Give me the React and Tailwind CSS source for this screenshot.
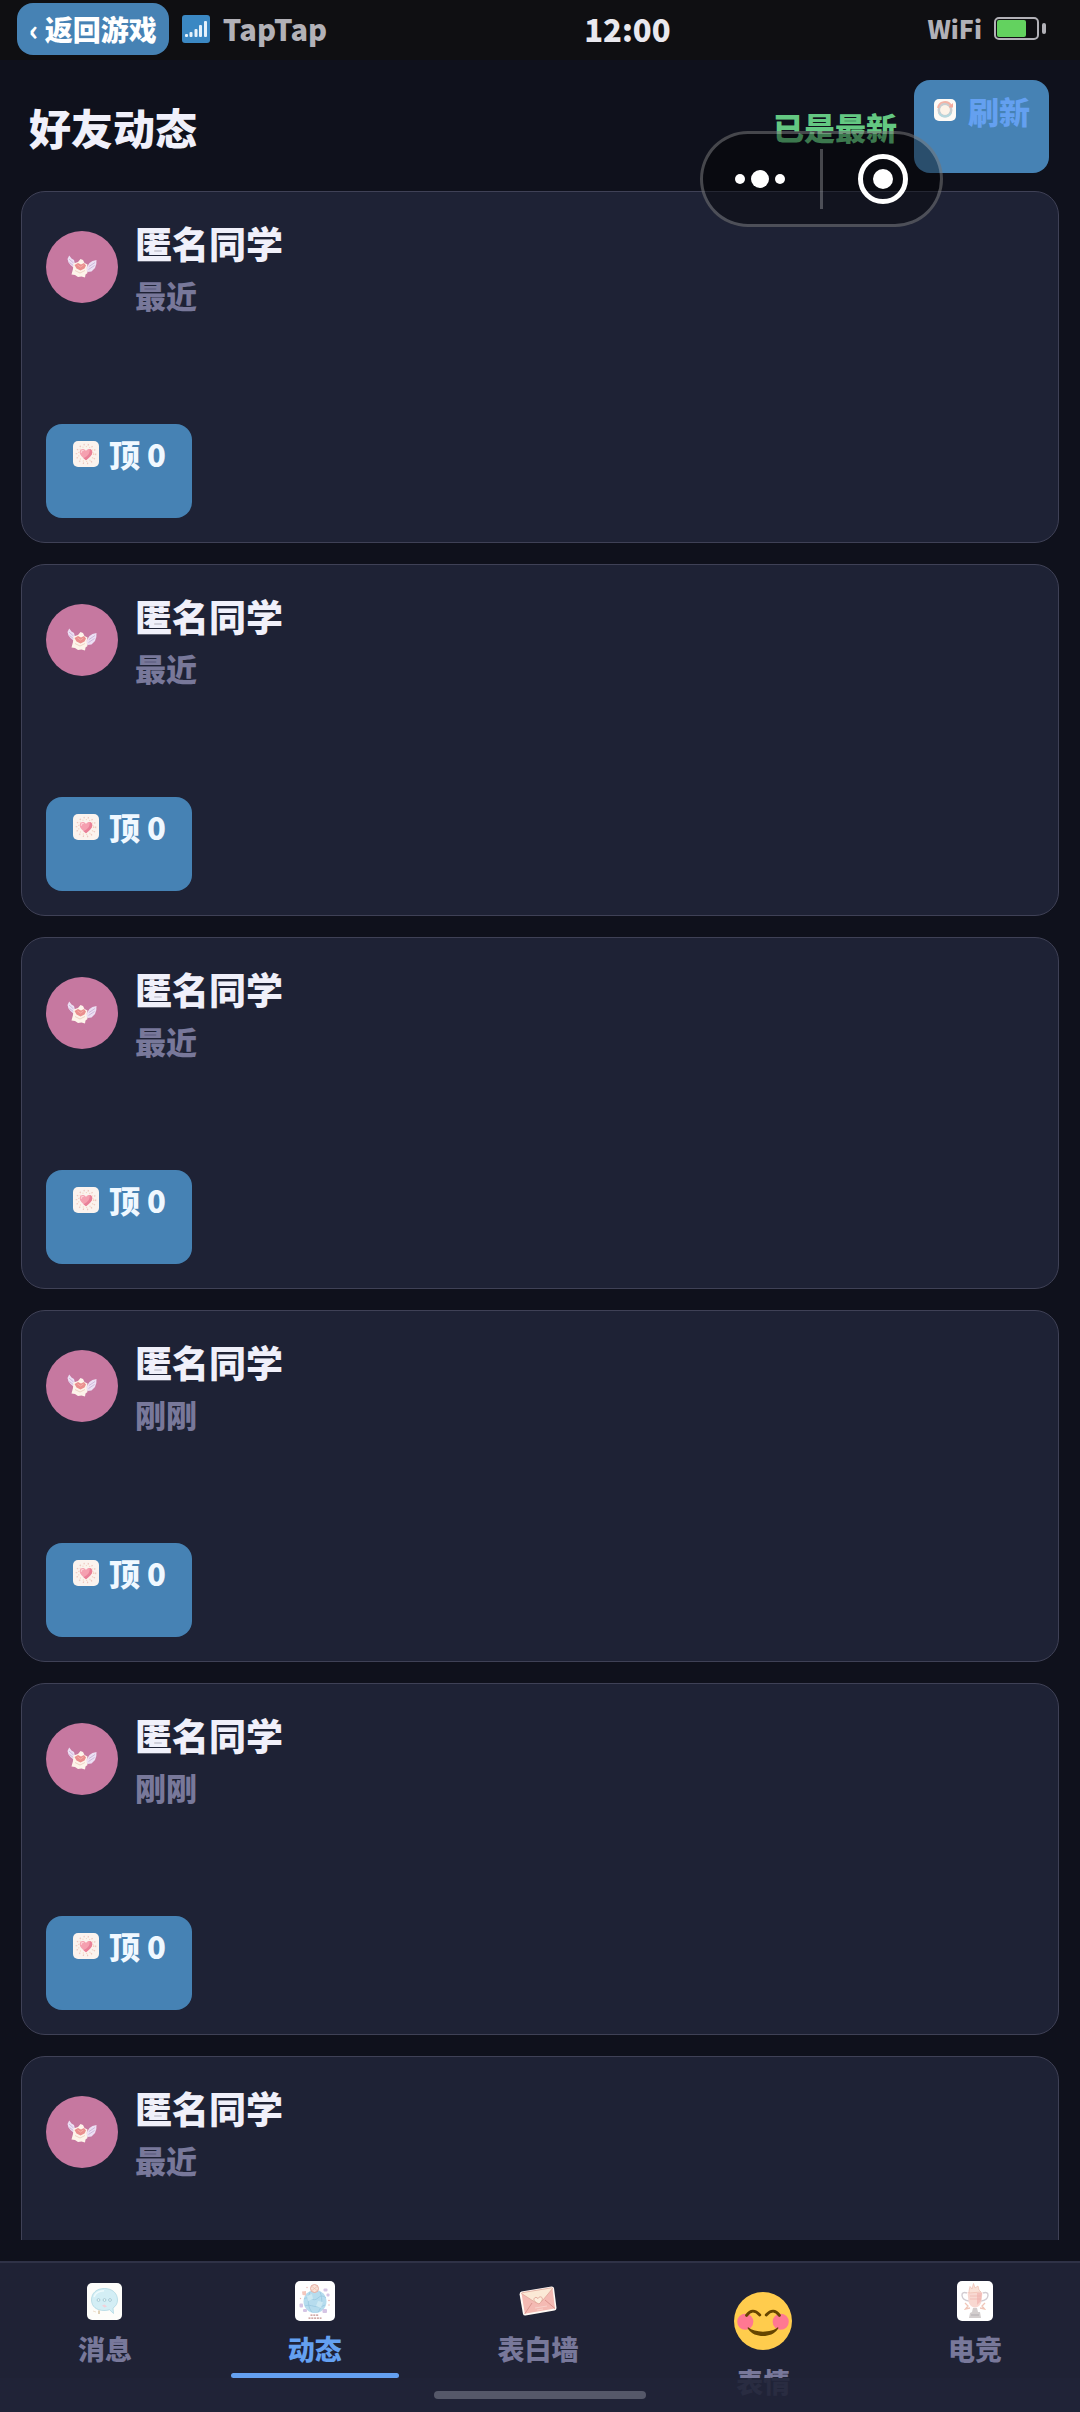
import { useState } from "react";

const POSTS = [
    { id: 1, name: "匿名同学", time: "最近", likes: 0 },
    { id: 2, name: "匿名同学", time: "最近", likes: 0 },
    { id: 3, name: "匿名同学", time: "最近", likes: 0 },
    { id: 4, name: "匿名同学", time: "刚刚", likes: 0 },
    { id: 5, name: "匿名同学", time: "刚刚", likes: 0 },
    { id: 6, name: "匿名同学", time: "最近", likes: 0 },
];

// ---------- Icons ----------

const SignalIcon = () => (
    <svg className="size-7 shrink-0" viewBox="0 0 28 28" aria-hidden="true">
        <rect width="28" height="28" rx="3" fill="#3b88c3" />
        <g fill="#e6f2fb">
            <rect x="3" y="19" width="3" height="3" rx="1" />
            <rect x="7.5" y="17" width="3" height="5" rx="1" />
            <rect x="12.5" y="14" width="3" height="8" rx="1" />
            <rect x="17" y="10" width="3" height="12" rx="1" />
            <rect x="22" y="6" width="3" height="16" rx="1" />
        </g>
    </svg>
);

const BatteryIcon = () => (
    <svg className="h-6 w-[54px] shrink-0" viewBox="0 0 54 24" aria-hidden="true">
        <rect x="1" y="1" width="43" height="21" rx="4" fill="none" stroke="#b2b1b7" strokeWidth="2" />
        <rect x="3" y="3" width="29" height="17" rx="2" fill="#63d25f" />
        <rect x="48" y="6" width="4" height="11" rx="2" fill="#b2b1b7" />
    </svg>
);

const RefreshIcon = () => (
    <svg className="size-[22px] shrink-0" viewBox="0 0 22 22" aria-hidden="true">
        <rect width="22" height="22" rx="5" fill="#fdfaf6" />
        <circle cx="11" cy="11" r="6" fill="none" stroke="#c9cdd0" strokeWidth="3" />
        <path d="M4 9A7 7 0 0 1 17 6.500" fill="none" stroke="#f3b3a6" strokeWidth="2" />
        <path d="M14 8.500h5v-4.500z" fill="#f3a99d" />
        <path d="M5 14A7 7 0 0 0 17 14" fill="none" stroke="#b5d8de" strokeWidth="2" />
        <circle cx="11" cy="11" r="4.800" fill="#fdf3e8" />
    </svg>
);

const HeartIcon = () => (
    <svg className="size-[26px] shrink-0" viewBox="0 0 26 26" aria-hidden="true">
        <rect width="26" height="26" rx="5" fill="#fbf3ee" />
        <circle cx="13" cy="13" r="9.5" fill="none" stroke="#eec8c0" strokeWidth="1.6" strokeDasharray="1.2 3" />
        <circle cx="13" cy="13" r="7.500" fill="none" stroke="#f3d3bd" strokeWidth="1.2" strokeDasharray="1 2.5" />
        <path d="M13 19.200C9 16 6.700 13.800 6.700 11.200C6.700 7.800 11 6.900 13 10C15 6.900 19.300 7.800 19.300 11.200C19.300 13.800 17 16 13 19.200Z" fill="#f5a0b0" />
        <path d="M13 19.200C17 16 19.300 13.800 19.300 11.200C19.300 9.500 18 8.200 16.600 8.100C17.500 12.500 14 16 10.500 17.200Z" fill="#e98098" />
        <path d="M8.300 11.300C8.400 10 9.200 9.400 10.200 9.400" stroke="#fcd0d6" strokeWidth="1.2" fill="none" strokeLinecap="round" />
    </svg>
);

const WingedLetterIcon = () => (
    <svg className="h-6 w-[30px]" viewBox="0 0 30 24" aria-hidden="true">
        <path d="M2.200 .5L4.500 3.500L7 5L8 9L9.500 13L6.500 12.500L3.500 10L1.500 7.500L.5 4Z" fill="#ecdff3" />
        <path d="M29.500 5L25.500 6L22.500 8L20.500 11L18.500 14.500L20.500 17L24.500 16.500L28 13L29.300 9Z" fill="#ecdff3" />
        <path d="M2 4L6.500 8M2.500 7.500L7 11M28 7.500L22 11.500M27.500 10.500L21.500 14.500" stroke="#c6b0d6" strokeWidth=".8" />
        <path d="M6.500 8.500L11 7L13.500 4L16 5L17.500 8L20.500 9.500L19.500 14L20.500 18L18.500 19.500L18 22.500L14.500 21.500L11 22L8 20L4.500 19.500L6 14Z" fill="#fdf4ea" />
        <path d="M7.500 10L11 8L14 9.500L17 8L19 10.500L17.500 13.500L13.500 15.500L9.500 13.500Z" fill="#ea8f8e" />
        <path d="M10.500 10L13.500 12L16.500 10" stroke="#f6b8b0" strokeWidth=".8" fill="none" />
        <path d="M8 15.500L13 18L18 15.500" stroke="#eaccbd" strokeWidth=".8" fill="none" />
    </svg>
);

const ChatIcon = () => (
    <svg className="h-[37px] w-[35px]" viewBox="0 0 35 37" aria-hidden="true">
        <rect width="35" height="37" rx="5" fill="#fdfdfa" />
        <path d="M17.500 5.500C9.500 5.500 4.500 10 4.500 17C4.500 23.500 9.500 27.500 17 27.500C19 27.500 21 27.300 22.500 26.700L26.500 30.500L26 25C29 23 30.500 20.500 30.500 17C30.500 10 25 5.500 17.500 5.500Z" fill="#d3eef5" stroke="#a9d4e0" strokeWidth=".7" />
        <path d="M7 14C8.500 10 12 8 17 7.800" stroke="#eefafc" strokeWidth="1.500" fill="none" />
        <g fill="#eef8f8" stroke="#8fbac8" strokeWidth=".7">
            <circle cx="11.500" cy="17" r="1.400" />
            <circle cx="17.500" cy="17" r="1.400" />
            <circle cx="23" cy="17" r="1.400" />
        </g>
        <path d="M15 22.500L17.500 21.500L20 23.500L17.500 24.500Z" fill="#f3cfd8" />
        <path d="M12 27.500V31" stroke="#d9c6a4" strokeWidth="1.600" />
        <path d="M6 28L9 29" stroke="#efe2cf" strokeWidth="1" />
    </svg>
);

const GlobeIcon = () => (
    <svg className="size-10" viewBox="0 0 40 40" aria-hidden="true">
        <rect width="40" height="40" rx="5" fill="#fff" />
        <circle cx="20" cy="20.500" r="11.500" fill="#b6dcee" />
        <path d="M9 18C14 14 18 22 23 17C26 14 29 15 31 17M10 25C15 22 22 29 30 24M15 11C12 18 13 27 17 31M25 11C28 18 27 27 23 31" stroke="#98c8e0" strokeWidth=".8" fill="none" />
        <path d="M12 15L17 13L18 18L13 20ZM23 20L28 21L26 27L21 25Z" fill="#cde8f2" />
        <circle cx="19.500" cy="7.500" r="4" fill="#fbe3d8" stroke="#e2a59a" strokeWidth=".9" />
        <path d="M17 9.500L22 5.500M17 5.500L22 9.500" stroke="#eab5a6" strokeWidth=".6" />
        <g fill="#d5c4e4">
            <rect x="28.500" y="7.500" width="4" height="3" rx="1" />
            <rect x="31.500" y="12.500" width="3" height="3" rx="1" />
            <rect x="4.500" y="22.500" width="3.500" height="4" rx="1" />
            <rect x="27.500" y="28" width="4.500" height="4" rx="1" />
            <rect x="8" y="28" width="4" height="3" rx="1" />
        </g>
        <path d="M7 10.500L11 10L11 14.500L7.500 14Z" fill="#f4c7bd" />
        <g fill="#eab3ae">
            <circle cx="12" cy="6.500" r=".7" />
            <circle cx="5.500" cy="17.500" r=".7" />
            <circle cx="34" cy="19.500" r=".8" />
            <circle cx="34" cy="24" r=".7" />
        </g>
        <path d="M15.500 34.200H24M13.500 37.200H26.500" stroke="#c08f8b" strokeWidth="1.200" strokeDasharray="2 .8" />
    </svg>
);

const EnvelopeIcon = () => (
    <svg className="h-[30px] w-[38px]" viewBox="0 0 38 30" aria-hidden="true">
        <path d="M2.500 5.500L32.500 .5Q34.500 .3 35 2L37.500 22Q37.500 24 35.500 24.500L6.500 29.500Q4.500 29.700 4 28L.6 8.500Q.5 6 2.500 5.500Z" fill="#fffaf5" />
        <path d="M2.500 7.500L33.500 2.200L36 22.500L5.800 27.800Z" fill="#f4bab3" />
        <path d="M5.800 27.800L13 17M36 22.500L26 14" stroke="#dc958f" strokeWidth="1" />
        <path d="M2.500 7.500Q2.500 6.800 3.500 6.600L32.500 1.800Q33.500 1.700 33.500 2.600L24 14Q20 18.500 15 15.500Z" fill="#fbe9d6" stroke="#e0a79a" strokeWidth=".8" />
        <path d="M20 18C16.500 16.500 14.500 14.800 15 12.800C15.600 11 18 11 19 12.600C19.700 10.700 22.300 10.200 23.200 12C23.900 13.900 22.300 16 20 18Z" fill="#fdeedd" stroke="#dd9c90" strokeWidth=".8" />
        <path d="M16 22L28 20M18 24L24 23" stroke="#f9d3cb" strokeWidth="1" />
    </svg>
);

const SmileIcon = () => (
    <svg className="size-[58px]" viewBox="0 0 36 36" aria-hidden="true">
        <circle cx="18" cy="18" r="18" fill="#ffcc4d" />
        <circle cx="7" cy="18.500" r="5" fill="#ff7892" />
        <circle cx="29" cy="18.500" r="5" fill="#ff7892" />
        <path d="M7.800 14.500Q11.500 9.300 16 14.300M20 14.300Q24.500 9.300 28.200 14.500" stroke="#664500" strokeWidth="1.800" fill="none" strokeLinecap="round" />
        <path d="M8.800 21.900Q8 22.300 9 23.200C12.500 28.600 23.500 28.600 27 23.200Q28 22.300 27.200 21.900C23 25.500 13 25.500 8.800 21.900Z" fill="#664500" />
    </svg>
);

const TrophyIcon = () => (
    <svg className="h-10 w-9" viewBox="0 0 36 40" aria-hidden="true">
        <rect width="36" height="40" rx="5" fill="#fff" />
        <path d="M10 12C3 9 3 19 12 20M26 12C33 9 33 19 24 20" stroke="#d2ccd2" strokeWidth="1.400" fill="none" />
        <path d="M10.500 11H25.500L24.500 20C24 24 21 26.500 18 26.500C15 26.500 12 24 11.500 20Z" fill="#f8d8d1" />
        <path d="M20 12H25L24 20L20 24Z" fill="#f3bfba" />
        <path d="M12 12V10L13 5.500L15 8L16.500 2.500L18 7L21 5L22 9L24 11Z" fill="#fae2d8" stroke="#eebdb0" strokeWidth=".7" />
        <path d="M13 15H24M13 18H24" stroke="#eeb6ae" strokeWidth=".7" />
        <path d="M8 22L11 25L8.500 28L13 27M28 22L25 25L27.500 28L23 27" stroke="#f0c6b8" strokeWidth="1.300" fill="none" />
        <path d="M16 27H20L21 31H23L24 37H12L13 32L15 31Z" fill="#d2cdcd" />
        <path d="M14 34H22" stroke="#b2adb0" strokeWidth="1" />
    </svg>
);

const TABS = [
    { key: "messages", label: "消息", Icon: ChatIcon },
    { key: "feed", label: "动态", Icon: GlobeIcon },
    { key: "wall", label: "表白墙", Icon: EnvelopeIcon },
    { key: "emoji", label: "表情", Icon: SmileIcon, large: true },
    { key: "esports", label: "电竞", Icon: TrophyIcon },
];

// ---------- Sections ----------

const StatusBar = () => (
    <div className="flex h-[60px] shrink-0 items-center justify-between bg-[#0f0f12] pr-[32px] pb-0.5 pl-[17px]">
        <div className="flex items-center gap-[13px]">
            <button type="button" className="h-[52px] rounded-2xl bg-[#4682b4] px-3 text-[28px] text-white">
                ‹ 返回游戏
            </button>
            <SignalIcon />
            <span className="text-[29px] text-[#b2b1b7]">TapTap</span>
        </div>
        <div className="text-[31px] text-[#e9e8ee]">12:00</div>
        <div className="flex items-center gap-3">
            <span className="text-[25px] text-[#b2b1b7]">WiFi</span>
            <BatteryIcon />
        </div>
    </div>
);

const Capsule = () => (
    <div className="absolute top-[131px] right-[137px] flex h-24 w-[243px] items-center rounded-full border-3 border-white/25 bg-black/40">
        <button type="button" aria-label="更多" className="flex flex-1 items-center justify-center gap-1.5">
            <span className="size-2.5 rounded-full bg-white" />
            <span className="size-[18px] rounded-full bg-white" />
            <span className="size-2.5 rounded-full bg-white" />
        </button>
        <span className="mx-[3px] h-[60px] w-[3px] bg-white/25" />
        <button type="button" aria-label="关闭" className="flex flex-1 items-center justify-center">
            <span className="flex size-[50px] items-center justify-center rounded-full border-5 border-white">
                <span className="size-5 rounded-full bg-white" />
            </span>
        </button>
    </div>
);

const PostCard = ({ post, onLike }) => (
    <article className="shrink-0 rounded-3xl border border-[#3f4156] bg-[#1e2235] px-6 pt-[23px] pb-6">
        <div className="flex items-center gap-[17px]">
            <div className="flex size-[72px] items-center justify-center rounded-full bg-[#c678a0]">
                <WingedLetterIcon />
            </div>
            <div className="flex flex-col">
                <span className="text-[37px] leading-[56px] text-[#f0f0fa]">{post.name}</span>
                <span className="text-[31px] leading-[48px] text-[#78789a]">{post.time}</span>
            </div>
        </div>
        <button
            type="button"
            onClick={() => onLike(post.id)}
            className="mt-[105px] flex h-[94px] items-start gap-2.5 rounded-2xl bg-[#4682b4] pt-2.5 pr-[26px] pl-[27px] text-[31px] leading-10 text-[#f0f8ff]"
        >
            <span className="flex h-10 items-center">
                <HeartIcon />
            </span>
            顶 {post.likes}
        </button>
    </article>
);

const TabBar = ({ active, onChange }) => (
    <nav className="relative flex h-[151px] shrink-0 overflow-hidden border-t-2 border-[#2f3247] bg-[#1f2235] pb-[34px]">
        {TABS.map(({ key, label, Icon, large }) => (
            <button
                key={key}
                type="button"
                onClick={() => onChange(key)}
                className={`relative flex flex-auto flex-col items-center gap-2 pt-[18px] text-[27px] leading-10 ${
                    active === key ? "text-[#64a0f0]" : "text-[#78789a]"
                }`}
            >
                <span className={`flex shrink-0 justify-center ${large ? "h-[73px] items-end pb-1" : "h-10 items-center"}`}>
                    <Icon />
                </span>
                {label}
                {active === key && <span className="absolute bottom-0 h-[5px] w-4/5 rounded-full bg-[#64a0f0]" />}
            </button>
        ))}
        {/* Home indicator area */}
        <div className="absolute inset-x-0 bottom-0 flex h-[34px] items-center justify-center bg-[#202437]/90">
            <span className="h-2 w-[212px] rounded-full bg-[#555869]" />
        </div>
    </nav>
);

const App = () => {
    const [posts, setPosts] = useState(POSTS);
    const [tab, setTab] = useState("feed");

    const handleLike = (id) => {
        setPosts((prev) => prev.map((p) => (p.id === id ? { ...p, likes: p.likes + 1 } : p)));
    };

    return (
        <div className="relative flex h-screen flex-col overflow-hidden bg-[#0f111c] font-['Noto_Sans_CJK_SC',sans-serif] font-black">
            <StatusBar />

            <header className="flex shrink-0 items-center gap-[17px] pt-5 pr-[31px] pb-[18px] pl-[29px]">
                <h1 className="flex-1 text-[42px] leading-[60px] text-[#f0f0fa]">好友动态</h1>
                <span className="text-[31px] leading-[46px] text-[#64c882]">已是最新</span>
                <button
                    type="button"
                    onClick={() => setPosts(POSTS)}
                    className="flex h-[93px] items-start gap-3 rounded-2xl bg-[#4682b4] pt-[9px] pr-[19px] pl-5 text-[31px] leading-[44px] text-[#64a0f0]"
                >
                    <span className="flex h-[42px] items-center">
                        <RefreshIcon />
                    </span>
                    刷新
                </button>
            </header>

            <main className="mb-[21px] flex min-h-0 flex-1 flex-col gap-[21px] overflow-y-auto px-[21px] [scrollbar-width:none]">
                {posts.map((post) => (
                    <PostCard key={post.id} post={post} onLike={handleLike} />
                ))}
            </main>

            <TabBar active={tab} onChange={setTab} />
            <Capsule />
        </div>
    );
};

export default App;
